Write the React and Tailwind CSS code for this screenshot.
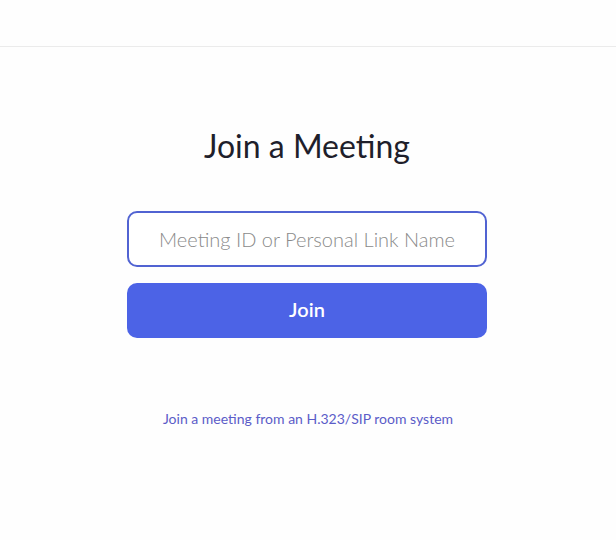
import React from 'react';

const App = () => {
  return (
    <div className="min-h-[540px] bg-[#fefefe] font-['Lato','Noto_Sans',sans-serif]">
      <header className="h-[47px] border-b border-[#ebebeb]" />
      <main className="flex flex-col items-center">
        <h1 className="mt-[77px] mr-[2px] text-[32px] leading-[44px] text-[#1f1f2b]">Join a Meeting</h1>
        <div className="mt-[43px] mr-[2px] flex w-[360px] flex-col gap-[16px]">
          <input
            type="text"
            placeholder="Meeting ID or Personal Link Name"
            className="h-[56px] w-full rounded-[10px] border-2 border-[#5163d2] bg-white px-4 text-center text-[20px] font-light text-[#333] placeholder:text-[#8a8a8a] outline-none"
          />
          <button className="h-[55px] w-full rounded-[10px] bg-[#4c63e6] pb-[4px] text-[20px] font-semibold text-white">
            Join
          </button>
        </div>
        <a href="#" className="mt-[70px] text-[14px] text-[#5b5cc8]">
          Join a meeting from an H.323/SIP room system
        </a>
      </main>
    </div>
  );
};

export default App;
